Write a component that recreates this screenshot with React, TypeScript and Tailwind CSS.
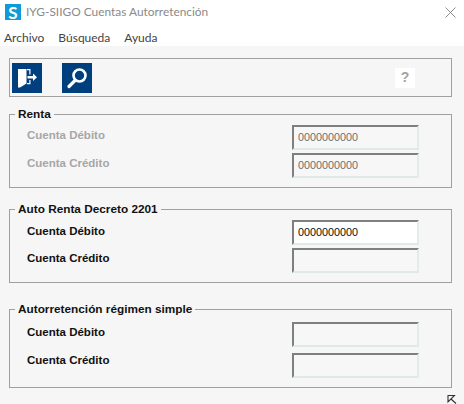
function ExitIcon() {
  return (
    <svg viewBox="0 0 30 30" className="h-[30px] w-[30px]">
      <rect width="30" height="30" fill="#003f7d" />
      <path d="M6 6h8.5v14.5L8 24.5H6z" fill="#fff" />
      <path d="M15 6h3.5v5.5h-1.2V7.2H15zM15 20h2.3v-3h1.2v4.2H15z" fill="#fff" />
      <path d="M15.5 13h5.5v-2.6l4 3.8-4 3.8V15.4h-5.5z" fill="#fff" />
    </svg>
  );
}

function SearchIcon() {
  return (
    <svg viewBox="0 0 30 30" className="h-[30px] w-[30px]">
      <rect width="30" height="30" fill="#003f7d" />
      <circle cx="17.5" cy="12.5" r="6" fill="none" stroke="#fff" strokeWidth="2.6" />
      <path d="M13 17.5 7 23.5" stroke="#fff" strokeWidth="3.2" strokeLinecap="round" />
    </svg>
  );
}

function Field({ label, value, enabled, disabledLabel, mt, labelPb }: {
  label: string;
  value?: string;
  enabled?: boolean;
  disabledLabel?: boolean;
  mt: string;
  labelPb: string;
}) {
  return (
    <div className={`flex items-center justify-between pl-[17px] pr-[32px] ${mt}`}>
      <span className={`text-[11.5px] font-bold leading-none ${labelPb} ${disabledLabel ? "text-[#a6a6a6]" : "text-[#111]"}`}>
        {label}
      </span>
      <div
        className={`flex h-[25px] w-[127px] items-center border-2 border-t-[#7f7f7f] border-l-[#7f7f7f] border-r-[#e3ecec] border-b-[#dfe9e9] pl-[4px] pb-[1px] text-[10.8px] ${
          enabled ? "bg-white text-[#0a0a0a]" : "bg-[#f7f7f7] text-[#6d6d6d]"
        }`}
      >
        {value}
      </div>
    </div>
  );
}

function Group({ title, className, children }: { title: string; className: string; children: React.ReactNode }) {
  return (
    <fieldset className={`mx-[9px] w-[443px] border border-[#a0a0a0] ${className}`}>
      <legend className="ml-[5px] px-[3px] text-[11.8px] font-bold leading-[12px] text-[#111]">{title}</legend>
      {children}
    </fieldset>
  );
}

export default function App() {
  return (
    <div className="relative flex h-[404px] w-[464px] flex-col overflow-hidden bg-[#f6f6f6] font-['Liberation_Sans',sans-serif]">
      <div className="h-[46px] bg-white font-['Lato',sans-serif]">
        <div className="flex h-[24px] items-center pl-[5px]">
          <div className="flex h-[16px] w-[16px] items-center justify-center bg-[#0f9bd7] text-[17px] font-bold leading-none text-white">
            S
          </div>
          <span className="ml-[5px] text-[11.9px] text-[#8a8a8a]">IYG-SIIGO Cuentas Autorretención</span>
          <svg viewBox="0 0 11 11" className="ml-auto mr-[8px] h-[11px] w-[11px]">
            <path d="M.5.5l10 10M10.5.5l-10 10" stroke="#6e6e6e" strokeWidth="0.8" />
          </svg>
        </div>
        <div className="flex gap-[14px] pl-[4px] pt-[5px] text-[12px] leading-[17px] text-[#444]">
          <span>Archivo</span>
          <span>Búsqueda</span>
          <span>Ayuda</span>
        </div>
      </div>

      <div className="mx-[9px] mt-[12px] flex h-[39px] w-[443px] items-center border border-[#a0a0a0] pl-[2px]">
        <ExitIcon />
        <div className="ml-[20px]">
          <SearchIcon />
        </div>
        <div className="ml-[303px] flex h-[20px] w-[20px] items-center justify-center bg-white text-[14px] font-bold text-[#a3a3a3]">
          ?
        </div>
      </div>

      <Group title="Renta" className="mt-[11px] h-[80px]">
        <Field label="Cuenta Débito" value="0000000000" disabledLabel mt="mt-[5px]" labelPb="pb-[3px]" />
        <Field label="Cuenta Crédito" value="0000000000" disabledLabel mt="mt-[3px]" labelPb="pb-[3px]" />
      </Group>

      <Group title="Auto Renta Decreto 2201" className="mt-[15px] h-[80px]">
        <Field label="Cuenta Débito" value="0000000000" enabled mt="mt-[5px]" labelPb="pb-[1px]" />
        <Field label="Cuenta Crédito" mt="mt-[3px]" labelPb="pb-[3px]" />
      </Group>

      <Group title="Autorretención régimen simple" className="mt-[20px] h-[85px]">
        <Field label="Cuenta Débito" mt="mt-[7px]" labelPb="pb-[3px]" />
        <Field label="Cuenta Crédito" mt="mt-[6px]" labelPb="pb-[10px]" />
      </Group>

      <svg viewBox="0 0 10 9" className="absolute bottom-0 left-[447px] h-[9px] w-[10px]">
        <path d="M1 .5h6.5L1 7zM4 4l5 4.5" fill="none" stroke="#333" strokeWidth="1.1" />
      </svg>
    </div>
  );
}
